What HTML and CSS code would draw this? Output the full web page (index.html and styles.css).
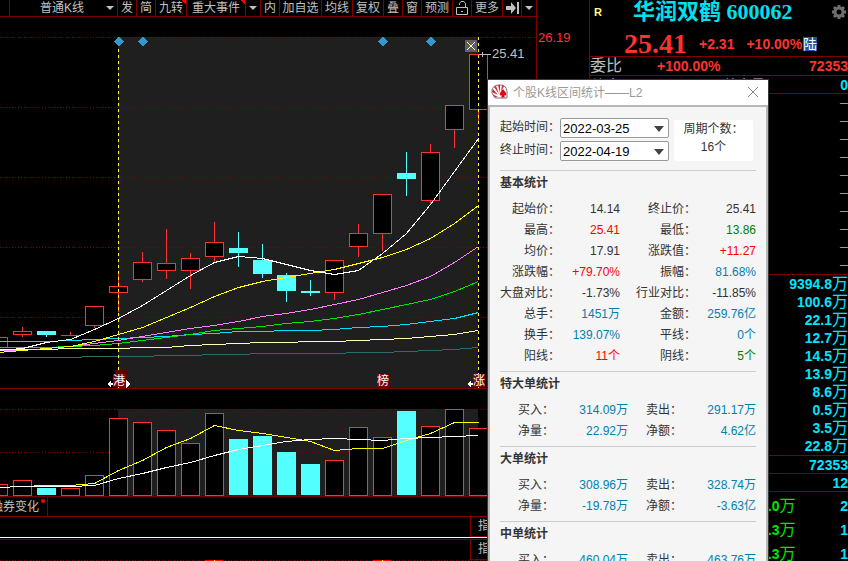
FILE: index.html
```html
<!DOCTYPE html>
<html lang="zh-CN">
<head>
<meta charset="UTF-8">
<meta name="viewport" content="width=device-width, initial-scale=1.0">
<title>华润双鹤 600062</title>
<link rel="stylesheet" href="styles.css">
</head>
<body>
<div class="app">
  <main class="charts">
    <nav class="toolbar">
      <span class="spacer"></span>
      <button class="period">普通K线<i class="caret"></i></button>
      <button class="w1">发</button>
      <button class="w1">简</button>
      <button class="w2 hot">九转</button>
      <button class="w4 hot">重大事件</button>
      <button class="drop"><i class="caret"></i></button>
      <button class="w1">内</button>
      <button class="w3">加自选</button>
      <button class="w2">均线</button>
      <button class="w2">复权</button>
      <button class="w1">叠</button>
      <button class="w1">窗</button>
      <button class="w2">预测</button>
      <button class="w1" aria-label="锁定">
        <svg width="12" height="14" viewBox="0 0 12 14" fill="none" stroke="#c0c0c0"><path d="M.5 6.500h11v7H.5zM3.500 4V2.500L5 .5h3L9.500 2.500V6.500M5 10.500h2"/></svg>
      </button>
      <button class="w2">更多</button>
      <button class="w1" aria-label="到最后">
        <svg width="13" height="12" viewBox="0 0 13 12" fill="#c0c0c0"><path d="M0 4h5V0l5 6-5 6V8H0zM11 0h2v12h-2z"/></svg>
      </button>
      <button class="drop"><i class="caret"></i></button>
    </nav>

    <svg id="price" class="plot" viewBox="0 17 536 372">
      <rect class="range" x="118" y="37" width="360" height="351"/>
      <g class="grid">
        <path d="M0 37.500H536M0 107.500H536M0 177.500H536M0 247.500H536M0 317.500H536"/>
      </g>
      <g id="candles"></g>
      <g id="averages"></g>
      <path class="cursor" d="M118.500 37V388M478.500 37V388"/>
      <g class="event">
        <path d="M119 37l5 4.500-5 4.500-5-4.500zM143 37l5 4.500-5 4.500-5-4.500zM383 37l5 4.500-5 4.500-5-4.500zM431 37l5 4.500-5 4.500-5-4.500z"/>
      </g>
      <g class="close-range">
        <rect x="465" y="40" width="12" height="12"/>
        <path d="M467 42l8 8M475 42l-8 8"/>
      </g>
      <path class="pointer" d="M479 54.500h12M482 52v5"/>
      <text class="peak" x="492" y="58">25.41</text>
      <g class="tags">
        <rect class="under" x="115" y="370" width="13" height="15"/>
        <rect x="113" y="374" width="13" height="13"/><text x="113" y="385">港</text>
        <rect x="377" y="374" width="12" height="13"/><text x="377" y="385">榜</text>
        <rect x="473" y="374" width="12" height="13"/><text x="473" y="385">涨</text>
        <path d="M107 384l4-4v3h2v2h-2v3zM130 384l-4-4v8zM467 384l4-4v3h2v2h-2v3zM491 384l-4-4v8z"/>
      </g>
      <path class="axis" d="M0 388.500H536"/>
    </svg>

    <svg id="volume" class="plot" viewBox="0 389 536 108">
      <rect class="range" x="118" y="409" width="360" height="87"/>
      <path class="grid" d="M0 409.500H536M0 452.500H536"/>
      <g id="bars"></g>
      <g id="volumeAverages"></g>
      <path class="axis" d="M0 496.500H536"/>
    </svg>

    <div class="tabs"><button class="tab">融券变化</button></div>
    <div class="indicator first"><button>指标</button></div>
    <div class="indicator"><button>指标</button></div>
    <svg class="plot" viewBox="0 560 536 1">
      <path class="grid" d="M0 560.500H536"/>
      <path stroke="#ff0000" d="M205 560.500h18M373 560.500h18"/>
      <path stroke="#ffff00" d="M214 560.500h1M382 560.500h1"/>
    </svg>
  </main>

  <div class="scale">26.19</div>

  <aside class="quote">
    <header>
      <div class="title">
        <b class="flag">R</b>
        <h1>华润双鹤 600062</h1>
        <svg class="gear" width="14" height="14" viewBox="-7 -7 14 14"><circle r="4" fill="none" stroke="#6e6e6e" stroke-width="3"/><path stroke="#6e6e6e" stroke-width="3" d="M0-7v3M0 7v-3M-7 0h3M7 0h-3M-5-5l2 2M5 5l-2-2M-5 5l2-2M5-5l-2 2"/></svg>
      </div>
      <div class="last">
        <strong>25.41</strong><span>+2.31</span><span>+10.00%</span><em>陆</em>
      </div>
    </header>
    <div class="ratio"><span>委比</span><b>+100.00%</b><b>72353</b></div>
    <div class="ratio sell"><span>均卖价</span><span>总卖量</span><b>0</b></div>
    <ul class="levels asks">
      <li>—</li><li>—</li><li>—</li><li>—</li><li>—</li>
      <li>—</li><li>—</li><li>—</li><li>—</li><li>—</li>
    </ul>
    <ul class="levels">
      <li>9394.8<i>万</i></li>
      <li>100.6<i>万</i></li>
      <li>22.1<i>万</i></li>
      <li>12.7<i>万</i></li>
      <li>14.5<i>万</i></li>
      <li>13.9<i>万</i></li>
      <li>8.6<i>万</i></li>
      <li>0.5<i>万</i></li>
      <li>3.5<i>万</i></li>
      <li>22.8<i>万</i></li>
    </ul>
    <ul class="levels total"><li>72353</li></ul>
    <ul class="levels total"><li>12</li></ul>
    <ul class="deals">
      <li><span>2.0<i>万</i></span><b>2</b></li>
      <li><span>4.3<i>万</i></span><b>1</b></li>
      <li><span>4.3<i>万</i></span><b>1</b></li>
    </ul>
  </aside>

  <section class="dialog" role="dialog" aria-labelledby="dialogTitle">
    <div class="dialog-bar">
      <svg width="17" height="15" viewBox="0 0 17 15"><path fill="#fff" stroke="#777" d="M1 9Q0 2 7 1q8-1 9 6v7H4z"/><path fill="#e02030" d="M1 8l1-3 5 6zM3 3l2-1 3 8zM7 1h2l0 8zM11 1l2 1-3 6zM1 10l6 3H4z"/><path fill="#e60012" d="M12 5l3 4q1 3-2 2.500l1 2h-4l1-2q-3 .5-2-2.500z"/></svg>
      <h2 id="dialogTitle">个股K线区间统计——L2</h2>
      <button aria-label="关闭"><svg width="12" height="12" viewBox="0 0 12 12" stroke="#888" fill="none"><path d="M1 1l10 10M11 1L1 11"/></svg></button>
    </div>
    <div class="dialog-body">
      <form class="dates">
        <div class="pickers">
          <label for="from">起始时间：</label>
          <div class="select"><select id="from"><option>2022-03-25</option></select></div>
          <label for="to">终止时间：</label>
          <div class="select"><select id="to"><option>2022-04-19</option></select></div>
        </div>
        <div class="periods"><span>周期个数：</span><span>16个</span></div>
      </form>

      <section class="stats basic">
        <h3>基本统计</h3>
        <table>
          <tr><th>起始价：</th><td>14.14</td><th>终止价：</th><td>25.41</td></tr>
          <tr><th>最高：</th><td class="up">25.41</td><th>最低：</th><td class="down">13.86</td></tr>
          <tr><th>均价：</th><td>17.91</td><th>涨跌值：</th><td class="up">+11.27</td></tr>
          <tr><th>涨跌幅：</th><td class="up">+79.70%</td><th>振幅：</th><td class="info">81.68%</td></tr>
          <tr><th>大盘对比：</th><td>-1.73%</td><th>行业对比：</th><td>-11.85%</td></tr>
          <tr><th>总手：</th><td class="info">1451万</td><th>金额：</th><td class="info">259.76亿</td></tr>
          <tr><th>换手：</th><td class="info">139.07%</td><th>平线：</th><td class="info">0个</td></tr>
          <tr><th>阳线：</th><td class="up">11个</td><th>阴线：</th><td class="down">5个</td></tr>
        </table>
      </section>

      <section class="stats">
        <h3>特大单统计</h3>
        <table>
          <tr><th>买入：</th><td class="info">314.09万</td><th>卖出：</th><td class="info">291.17万</td></tr>
          <tr><th>净量：</th><td class="info">22.92万</td><th>净额：</th><td class="info">4.62亿</td></tr>
        </table>
      </section>

      <section class="stats">
        <h3>大单统计</h3>
        <table>
          <tr><th>买入：</th><td class="info">308.96万</td><th>卖出：</th><td class="info">328.74万</td></tr>
          <tr><th>净量：</th><td class="info">-19.78万</td><th>净额：</th><td class="info">-3.63亿</td></tr>
        </table>
      </section>

      <section class="stats">
        <h3>中单统计</h3>
        <table>
          <tr><th>买入：</th><td class="info">460.04万</td><th>卖出：</th><td class="info">463.76万</td></tr>
        </table>
      </section>
    </div>
  </section>
</div>
<script src="chart.js"></script>
</body>
</html>
```
FILE: styles.css
```css
* {
  box-sizing: border-box;
}

body {
  margin: 0;
  background-color: #000;
  color: #c0c0c0;
  font-family: "Liberation Sans", "Noto Sans CJK SC", sans-serif;
  font-size: 12px;
  overflow: hidden;
}

h1, h2, h3, ul {
  margin: 0;
  padding: 0;
}

ul {
  list-style: none;
}

i, em {
  font-style: normal;
}

button {
  margin: 0;
  padding: 0;
  border: none;
  background: none;
  color: inherit;
  font: inherit;
}

.app {
  position: relative;
  display: flex;
  height: 100vh;
  overflow: hidden;
}

/* charts */
.charts {
  flex: 1;
  min-width: 0;
}

.toolbar {
  display: flex;
  height: 17px;
  border-bottom: 1px solid #800000;
  overflow: hidden;
}

.toolbar button,
.toolbar .spacer {
  display: flex;
  flex: none;
  justify-content: center;
  align-items: center;
  height: 16px;
  padding-bottom: 1px;
  border-right: 1px solid #800000;
  line-height: 14px;
}

.toolbar .spacer {
  width: 10px;
}

.toolbar .period {
  width: 108px;
  gap: 22px;
  justify-content: flex-end;
  padding-right: 3px;
}

.toolbar .w1 {
  width: 19px;
}

.toolbar .w2 {
  width: 31px;
}

.toolbar .w3 {
  width: 42px;
}

.toolbar .w4 {
  width: 59px;
}

.toolbar .drop {
  width: 15px;
}

.toolbar .hot {
  background: linear-gradient(45deg, transparent 50%, #ff0000 50%) top right / 4px 4px no-repeat;
}

.caret {
  border: 4px solid transparent;
  border-top-color: #c0c0c0;
  border-bottom: none;
}

.plot {
  display: block;
  width: 100%;
  shape-rendering: crispEdges;
}

.plot .range {
  fill: #1f1f1f;
}

.plot .grid {
  stroke: #800000;
  stroke-dasharray: 1 2;
}

.plot .axis {
  stroke: #800000;
}

.plot polyline {
  fill: none;
}

.plot .rise {
  fill: #000;
  stroke: #ff3232;
}

.plot .fall {
  fill: #54ffff;
  stroke: #54ffff;
}

.plot .cursor {
  stroke: #ffff00;
  stroke-dasharray: 3 3;
}

.plot .event {
  fill: #3399cc;
}

.plot .close-range rect {
  fill: #606060;
}

.plot .close-range path {
  stroke: #fff;
  shape-rendering: auto;
}

.plot .pointer {
  stroke: #c0c0c0;
}

.plot .peak {
  fill: #c0c0c0;
  font-size: 13px;
}

.plot .tags rect {
  fill: #800000;
}

.plot .tags .under {
  fill: #600000;
}

.plot .tags text,
.plot .tags path {
  fill: #fff;
}

.tabs {
  display: flex;
  height: 20px;
  border-bottom: 1px solid #800000;
}

.tab {
  display: flex;
  position: relative;
  justify-content: flex-end;
  width: 48px;
  padding-right: 8px;
  border-right: 1px solid #800000;
  line-height: 20px;
  white-space: nowrap;
  overflow: hidden;
}

.tab::after {
  content: "";
  position: absolute;
  top: 2px;
  right: 2px;
  width: 4px;
  height: 4px;
  border-radius: 2px;
  background-color: #ff0000;
}

.indicator {
  display: flex;
  justify-content: flex-end;
  height: 20px;
}

.indicator.first {
  height: 23px;
  padding-bottom: 1px;
  border-bottom: 1px solid #800000;
  background: linear-gradient(#fff, #fff) 0 20px / 100% 1px no-repeat;
}

.indicator button {
  width: 66px;
  height: 20px;
  padding-left: 7px;
  border: 1px solid #800000;
  border-top: none;
  border-right: none;
  line-height: 19px;
  text-align: left;
}

.scale {
  flex: none;
  width: 53px;
  padding: 29px 1px;
  border-left: 1px solid #800000;
  color: #ff3232;
  font-size: 13px;
  line-height: 18px;
}

/* quote column */
.quote {
  flex: none;
  width: 259px;
  border-left: 1px solid #800000;
  font-size: 14px;
  white-space: nowrap;
}

.quote header {
  height: 57px;
  border-bottom: 1px solid #800000;
}

.title {
  display: flex;
  align-items: center;
  height: 23px;
  padding-left: 4px;
}

.flag {
  width: 39px;
  color: #ffff80;
  font-size: 11px;
}

h1 {
  flex: 1;
  color: #00e0f0;
  font-family: "Liberation Serif", "Noto Sans CJK SC", serif;
  font-size: 22px;
  line-height: 23px;
}

.gear {
  margin-right: 2px;
}

.last {
  display: flex;
  align-items: center;
  gap: 12px;
  height: 33px;
  padding-left: 34px;
  padding-top: 8px;
  color: #ff3232;
  font-weight: bold;
}

.last strong {
  font-family: "Liberation Serif", serif;
  font-size: 28px;
  line-height: 28px;
}

.last span {
  line-height: 16px;
}

.last em {
  margin-left: -11px;
  width: 14px;
  background-color: #2850a0;
  color: #fff;
  font-weight: normal;
  line-height: 14px;
}

.ratio {
  display: grid;
  grid-template-columns: 67px 1fr auto;
  height: 19px;
  border-bottom: 1px solid #800000;
  color: #ff3232;
  line-height: 18px;
}

.ratio span {
  color: #c0c0c0;
  font-size: 16px;
}

.ratio.sell {
  grid-template-columns: 131px 1fr auto;
  height: 18px;
  padding-left: 2px;
}

.ratio.sell span {
  font-size: 14px;
}

.ratio.sell b {
  color: #00e5ff;
}

.levels {
  border-bottom: 1px solid #800000;
  color: #00e5ff;
  font-weight: bold;
  text-align: right;
}

.levels li {
  height: 18px;
  line-height: 18px;
}

.levels.asks {
  color: #c0c0c0;
  font-size: 8px;
}

.levels.total li {
  height: 17px;
}

.quote i {
  font-size: 16px;
  font-weight: normal;
}

.deals li {
  display: flex;
  justify-content: space-between;
  height: 24px;
  padding-left: 170px;
  padding-top: 2px;
  color: #00e600;
  font-weight: bold;
  line-height: 24px;
}

.deals b {
  color: #00e5ff;
}

/* range statistics */
.dialog {
  position: absolute;
  top: 80px;
  right: 80px;
  bottom: 0;
  width: 280px;
  background-color: #f5f5f5;
  box-shadow: 0 0 0 1px #383838;
  color: #333;
  overflow: hidden;
}

.dialog-bar {
  display: flex;
  align-items: center;
  gap: 5px;
  height: 25px;
  padding: 0 9px 2px 3px;
  background-color: #fff;
}

.dialog-bar h2 {
  flex: 1;
  color: #999;
  font-size: 12px;
  font-weight: normal;
}

.dialog-bar button svg {
  display: block;
}

.dialog-body {
  min-height: 100%;
  padding: 0 10px;
  border: 2px solid #b8b8b8;
}

.dates {
  display: flex;
  justify-content: space-between;
  padding: 11px 3px 9px 0;
}

.pickers {
  display: grid;
  grid-template-columns: 60px 109px;
  gap: 3px 0;
}

.pickers label {
  line-height: 18px;
}

.select {
  position: relative;
}

.select::after {
  content: "";
  position: absolute;
  top: 8px;
  right: 5px;
  border: 5px solid transparent;
  border-top: 6px solid #444;
  border-bottom: none;
  pointer-events: none;
}

select {
  display: block;
  width: 100%;
  height: 20px;
  padding: 0 2px;
  border: 1px solid #999;
  border-radius: 2px;
  background-color: #fff;
  color: #000;
  font-family: inherit;
  font-size: 13px;
  appearance: none;
}

.periods {
  display: flex;
  flex-direction: column;
  align-items: center;
  width: 79px;
  margin-top: 2px;
  border-radius: 2px;
  background-color: #fff;
  line-height: 18px;
}

.stats {
  padding-bottom: 5px;
  border-top: 1px solid #ccc;
}

.stats h3 {
  height: 27px;
  font-size: 12px;
  line-height: 24px;
}

.stats table {
  width: 100%;
  border-collapse: collapse;
  table-layout: fixed;
}

.stats th,
.stats td {
  height: 21px;
  padding: 0;
  font-weight: normal;
  line-height: 20px;
  text-align: right;
}

.stats th {
  width: 54px;
}

.basic th {
  width: 60px;
}

.basic th:nth-child(3) {
  width: 76px;
}

.up {
  color: #ff0000;
}

.down {
  color: #008000;
}

.info {
  color: #0080b0;
}
```
FILE: chart.js
```js
const STEP = 24;
const FIRST = -2;

// high, top, bottom, low, falling
const candles = [
  [337, 337, 347, 347], [327, 331, 334, 337], [331, 331, 335, 337, true], [332, 335, 335, 336],
  [306, 306, 325, 328], [273, 286, 292, 312], [252, 262, 279, 282], [229, 263, 270, 279],
  [253, 258, 270, 289], [222, 242, 256, 262], [232, 248, 253, 267, true], [244, 260, 274, 278, true],
  [273, 275, 291, 302, true], [280, 291, 293, 296, true], [260, 260, 292, 300], [224, 233, 246, 257],
  [194, 194, 233, 251], [152, 173, 179, 196, true], [144, 152, 200, 204], [105, 105, 129, 148],
  [54, 54, 109, 121]
];

const volumes = [484, 480, 488, 488, 475, 418, 422, 430, 443, 413, 439, 436, 452, 464, 460, 427, 437, 411, 426, 409, 428];

const averages = {
  '#2f6b6b': [357, 357, 357, 357, 356, 356, 356, 355, 355, 354, 354, 353, 353, 353, 353, 352, 352, 351, 350, 349, 347],
  '#ffffb0': [349, 349, 349, 348, 348, 348, 347, 347, 345, 344, 343, 342, 342, 341, 341, 340, 339, 338, 336, 334, 330],
  '#00e0ff': [341, 341, 341, 340, 339, 338, 337, 336, 334, 333, 331, 331, 330, 330, 329, 327, 326, 324, 321, 318, 312],
  '#00e600': [347, 347, 347, 346, 345, 343, 340, 337, 334, 330, 328, 326, 323, 321, 318, 314, 309, 304, 299, 291, 281],
  '#ff80ff': [350, 350, 348, 346, 343, 340, 336, 332, 328, 325, 321, 316, 313, 309, 304, 299, 292, 285, 276, 262, 246],
  '#ffff00': [352, 350, 348, 346, 341, 334, 327, 317, 307, 296, 287, 281, 277, 273, 269, 263, 257, 249, 238, 223, 205],
  '#ffffff': [350, 348, 342, 339, 329, 318, 305, 290, 275, 262, 256, 258, 264, 270, 274, 270, 253, 233, 204, 171, 138]
};

const volumeAverages = {
  '#ffff00': [487, 486, 485, 485, 483, 470, 460, 447, 438, 425, 430, 433, 437, 441, 450, 448, 448, 440, 433, 422, 422],
  '#ffffff': [487, 486, 486, 486, 485, 478, 473, 467, 462, 455, 449, 445, 441, 439, 438, 439, 440, 438, 437, 436, 435]
};

function centre(i) {
  return FIRST + i * STEP;
}

function body(i, top, bottom, falling) {
  return `<rect class="${falling ? 'fall' : 'rise'}" x="${centre(i) - 8.5}" y="${top + 0.5}" width="18" height="${Math.max(bottom - top - (falling ? 1 : 0), 0.01)}"/>`;
}

function drawLines(id, lines) {
  let html = '';
  for (const color in lines) {
    const points = lines[color].map((y, i) => `${centre(i) + 0.5},${y + 0.5}`).join(' ');
    html += `<polyline stroke="${color}" points="${points}"/>`;
  }
  document.getElementById(id).innerHTML = html;
}

document.getElementById('candles').innerHTML = candles.map(([high, top, bottom, low, falling], i) => {
  const wick = `<path class="${falling ? 'fall' : 'rise'}" d="M${centre(i) + 0.5} ${high}V${low}"/>`;
  return wick + body(i, top, bottom, falling);
}).join('');

document.getElementById('bars').innerHTML = volumes.map((top, i) => body(i, top, 495, candles[i][4])).join('');

drawLines('averages', averages);
drawLines('volumeAverages', volumeAverages);
```
